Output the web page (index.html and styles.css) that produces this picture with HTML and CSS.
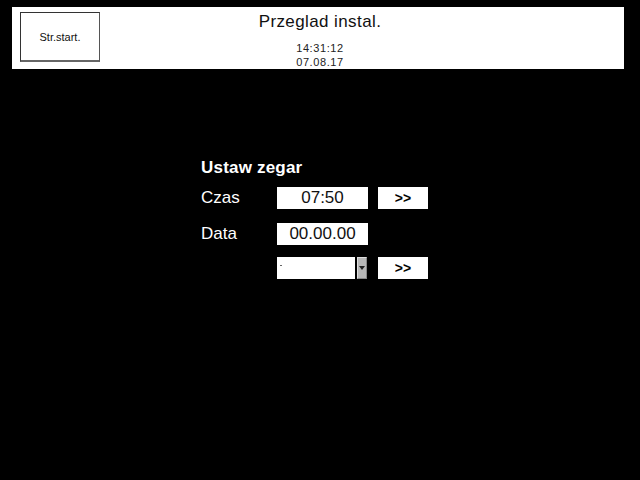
FILE: index.html
```html
<!DOCTYPE html>
<html lang="pl">
<head>
<meta charset="utf-8">
<title>Przeglad instal.</title>
<link rel="stylesheet" href="styles.css">
</head>
<body>
<header class="topbar">
  <div class="left"><button class="start-btn">Str.start.</button></div>
  <div class="center">
    <div class="title">Przeglad instal.</div>
    <div class="clock">14:31:12</div>
    <div class="clock">07.08.17</div>
  </div>
  <div class="right"></div>
</header>
<main class="panel">
  <h1 class="heading">Ustaw zegar</h1>
  <div class="row">
    <span class="label">Czas</span>
    <span class="field">07:50</span>
    <button class="go">&gt;&gt;</button>
  </div>
  <div class="row row-data">
    <span class="label">Data</span>
    <span class="field">00.00.00</span>
  </div>
  <div class="row row-select">
    <span class="label"></span>
    <span class="select"><span class="sel-text"><span class="mark"></span></span><span class="sel-arrow"><span class="tri"></span></span></span>
    <button class="go">&gt;&gt;</button>
  </div>
</main>
</body>
</html>
```
FILE: styles.css
```css
html, body {
  margin: 0;
  padding: 0;
  background: #000;
  width: 640px;
  height: 480px;
  overflow: hidden;
  font-family: "Liberation Sans", Arial, sans-serif;
}
.topbar {
  margin: 7px 16px 0 12px;
  height: 62px;
  background: #fff;
  display: grid;
  grid-template-columns: 1fr auto 1fr;
}
.left {
  padding: 5px 0 0 8px;
}
.start-btn {
  width: 80px;
  height: 50px;
  box-sizing: border-box;
  background: #fff;
  border: 1px solid #333;
  border-right-color: #555;
  border-bottom: 2px solid #666;
  font-family: "Liberation Sans", Arial, sans-serif;
  font-size: 11px;
  color: #111;
  padding: 0;
  margin: 0;
}
.center {
  display: flex;
  flex-direction: column;
  align-items: center;
  padding-left: 4px;
  padding-top: 5px;
}
.title {
  font-size: 17px;
  letter-spacing: 0.4px;
  line-height: 20px;
  color: #111;
}
.clock {
  font-size: 11px;
  letter-spacing: 0.6px;
  line-height: 14px;
  color: #222;
}
.title + .clock { margin-top: 9px; }
.panel {
  margin: 0 0 0 201px;
  padding-top: 88px;
  color: #fff;
}
.heading {
  margin: 0 0 8px 0;
  font-size: 17px;
  font-weight: bold;
  line-height: 22px;
  letter-spacing: 0.2px;
}
.row {
  display: flex;
  align-items: center;
  height: 22px;
}
.row-data { margin-top: 14px; }
.row-select { margin-top: 12px; }
.label {
  width: 76px;
  font-size: 17px;
  line-height: 22px;
}
.field {
  width: 91px;
  height: 22px;
  box-sizing: border-box;
  background: #fff;
  color: #111;
  font-size: 17px;
  line-height: 22px;
  text-align: center;
}
.go {
  margin: 0 0 0 10px;
  width: 50px;
  height: 22px;
  box-sizing: border-box;
  background: #fff;
  border: none;
  padding: 0;
  font-family: "Liberation Sans", Arial, sans-serif;
  font-weight: bold;
  font-size: 14px;
  color: #000;
}
.select {
  display: flex;
  width: 91px;
  height: 22px;
}
.sel-text {
  width: 78px;
  background: #fff;
  position: relative;
}
.mark {
  position: absolute;
  left: 3px;
  top: 8px;
  width: 2px;
  height: 1px;
  background: #666;
}
.sel-arrow {
  width: 10px;
  margin-left: 2px;
  margin-right: 1px;
  box-sizing: border-box;
  background: #b8b8b8;
  border: 1px solid #ddd;
  border-right-color: #888;
  border-bottom-color: #888;
  display: flex;
  align-items: center;
  justify-content: center;
}
.tri {
  width: 0;
  height: 0;
  border-left: 3px solid transparent;
  border-right: 3px solid transparent;
  border-top: 4px solid #222;
}
```
